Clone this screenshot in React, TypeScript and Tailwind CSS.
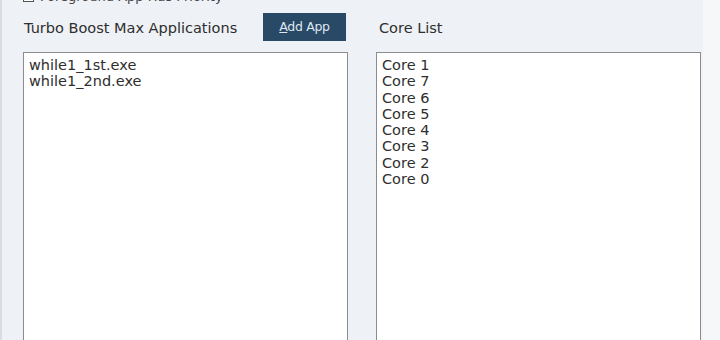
import React from 'react'

const apps = ['while1_1st.exe', 'while1_2nd.exe']
const cores = ['Core 1', 'Core 7', 'Core 6', 'Core 5', 'Core 4', 'Core 3', 'Core 2', 'Core 0']

const font = { fontFamily: '"DejaVu Sans", Verdana, sans-serif' }

export default function App() {
  return (
    <div
      className="w-[720px] h-[340px] overflow-hidden bg-[#eef1f5] text-[#2e2e2e] flex border-l-2 border-[#d9dde2]"
      style={font}
    >
      <div className="flex-1 flex flex-col pl-[21px]">
        {/* cut-off checkbox row */}
        <div className="h-[14px] -mt-[10px] flex items-center gap-[6px]">
          <span className="w-[11px] h-[11px] border border-[#555] bg-white" />
          <span className="text-[13px] leading-none text-[#444]">Foreground App Has Priority</span>
        </div>

        <div className="flex gap-[28px] mt-[10px]">
          <div className="w-[325px] flex flex-col">
            <div className="flex items-center h-[28px]">
              <span className="text-[14.5px] w-[240px] pl-[1px] pt-[3px]">Turbo Boost Max Applications</span>
              <button className="h-[28px] w-[83px] bg-[#294a66] text-[#dfe8f0] text-[12.5px] tracking-tight">
                <span className="underline">A</span>dd App
              </button>
            </div>
            <div className="mt-[11px] h-[300px] bg-white border border-[#8c8c8c] pt-[4px] pl-[5px] text-[14.5px] leading-[16.3px]">
              {apps.map((a) => (
                <div key={a}>{a}</div>
              ))}
            </div>
          </div>

          <div className="w-[325px] flex flex-col">
            <div className="flex items-center h-[28px]">
              <span className="text-[14.5px] pl-[3px] pt-[3px]">Core List</span>
            </div>
            <div className="mt-[11px] h-[300px] bg-white border border-[#8c8c8c] pt-[4px] pl-[5px] text-[14.5px] leading-[16.3px]">
              {cores.map((c) => (
                <div key={c}>{c}</div>
              ))}
            </div>
          </div>
        </div>
      </div>
      <div className="w-[17px] bg-[#f5f7f9]" />
    </div>
  )
}
